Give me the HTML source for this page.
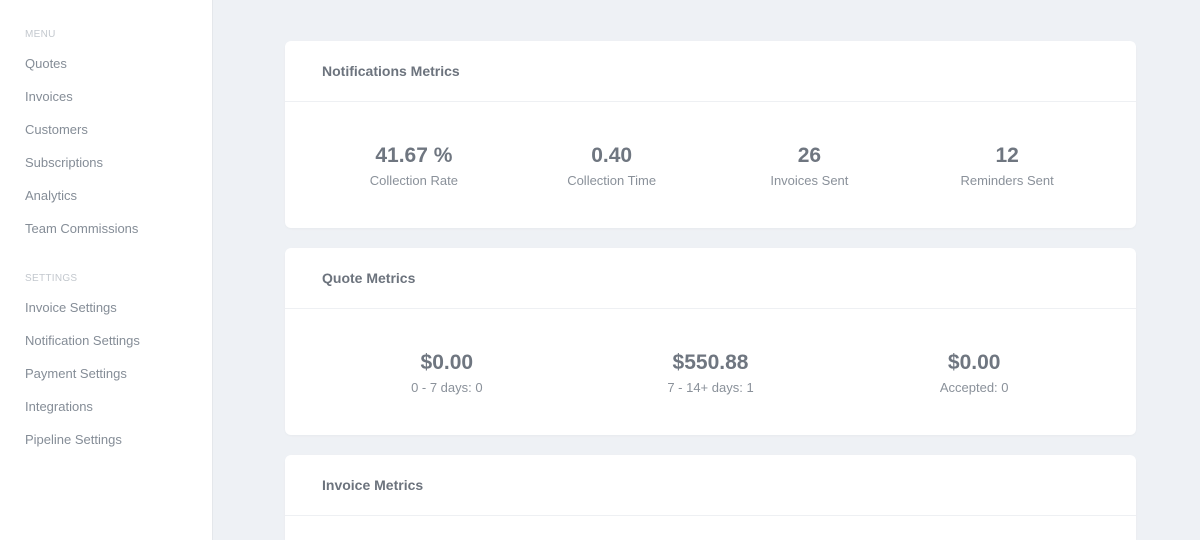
<!DOCTYPE html>
<html style="overflow:hidden;height:540px"><head><style>
*{margin:0;padding:0;box-sizing:border-box}
html,body{width:1200px;height:540px;overflow:hidden}
body{background:#eef1f5;font-family:"Liberation Sans",sans-serif;position:relative}
.side{position:absolute;left:0;top:0;width:213px;height:540px;background:#fff;border-right:1px solid #e4e7eb}
.h{position:absolute;left:25px;font-size:10px;color:#c3c8ce;letter-spacing:.3px}
.i{position:absolute;left:25px;font-size:13px;color:#858d97;line-height:16px}
.card{position:absolute;left:285px;width:851px;background:#fff;border-radius:6px;box-shadow:0 1px 2px rgba(0,0,0,.03);overflow:hidden}
.t{height:61px;border-bottom:1px solid #eef0f3;padding-left:37px;line-height:60px;font-size:14px;font-weight:bold;color:#6c737d}
.row{position:absolute;left:30px;right:30px;display:flex}
.row div{flex:1;text-align:center}
.v{font-size:21px;font-weight:bold;color:#6f7680;line-height:24px}
.l{font-size:13px;color:#8a919a;line-height:16px;margin-top:5px}
</style></head><body>
<div class="side">
<div class="h" style="top:29px">MENU</div>
<div class="i" style="top:56px">Quotes</div>
<div class="i" style="top:89px">Invoices</div>
<div class="i" style="top:122px">Customers</div>
<div class="i" style="top:155px">Subscriptions</div>
<div class="i" style="top:188px">Analytics</div>
<div class="i" style="top:221px">Team Commissions</div>
<div class="h" style="top:273px">SETTINGS</div>
<div class="i" style="top:300px">Invoice Settings</div>
<div class="i" style="top:333px">Notification Settings</div>
<div class="i" style="top:366px">Payment Settings</div>
<div class="i" style="top:399px">Integrations</div>
<div class="i" style="top:432px">Pipeline Settings</div>
</div>
<div class="card" style="top:41px;height:187px">
<div class="t">Notifications Metrics</div>
<div class="row" style="top:103px">
<div><div class="v">41.67 %</div><div class="l">Collection Rate</div></div>
<div><div class="v">0.40</div><div class="l">Collection Time</div></div>
<div><div class="v">26</div><div class="l">Invoices Sent</div></div>
<div><div class="v">12</div><div class="l">Reminders Sent</div></div>
</div></div>
<div class="card" style="top:248px;height:187px">
<div class="t">Quote Metrics</div>
<div class="row" style="top:103px">
<div><div class="v">$0.00</div><div class="l">0 - 7 days: 0</div></div>
<div><div class="v">$550.88</div><div class="l">7 - 14+ days: 1</div></div>
<div><div class="v">$0.00</div><div class="l">Accepted: 0</div></div>
</div></div>
<div class="card" style="top:455px;height:85px;border-radius:6px 6px 0 0">
<div class="t">Invoice Metrics</div>
</div>
</body></html>
